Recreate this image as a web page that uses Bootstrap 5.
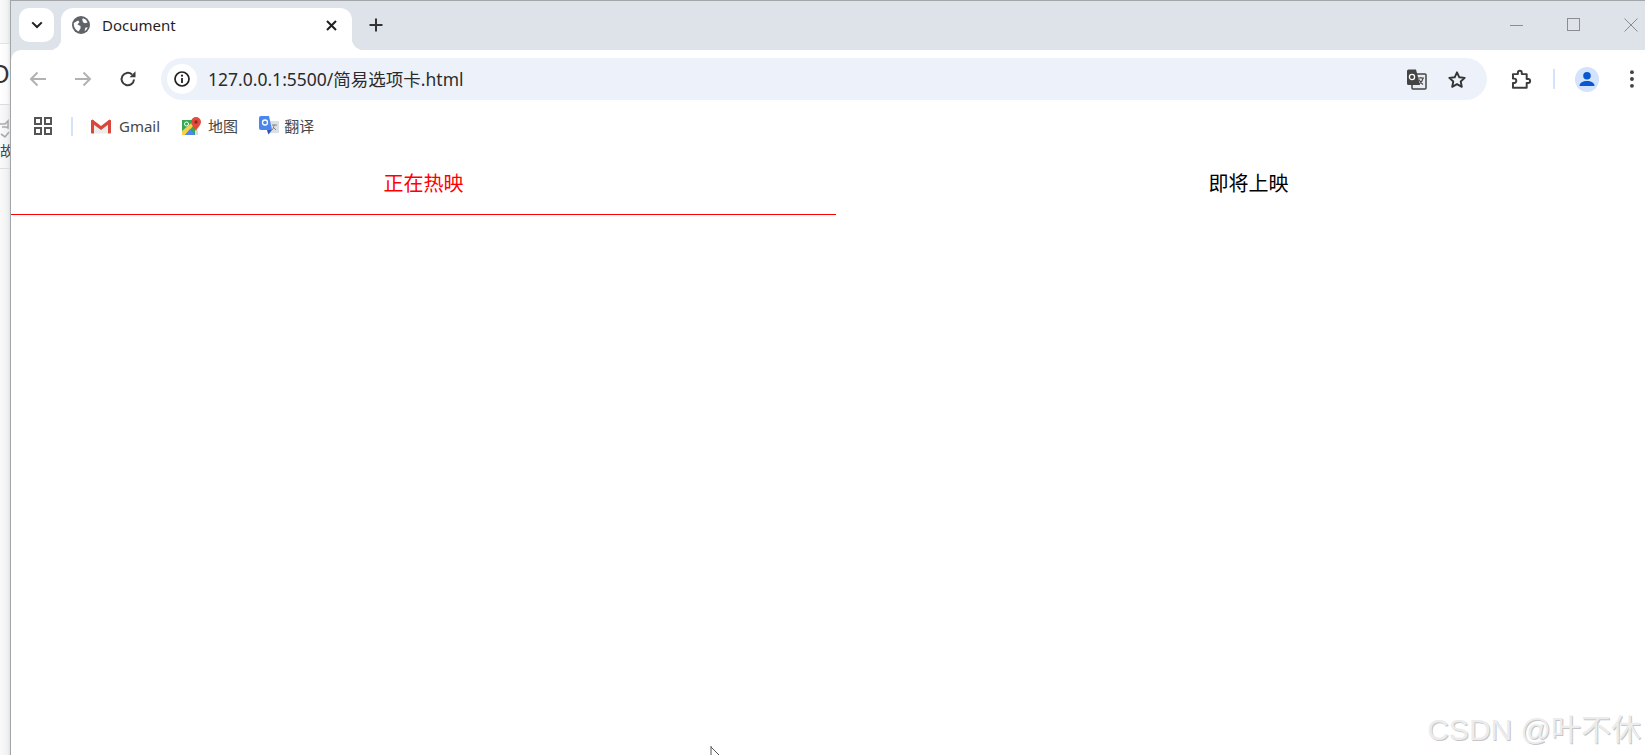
<!DOCTYPE html>
<html lang="zh-CN">
<head>
<meta charset="utf-8">
<title>Document</title>
<link href="https://cdn.jsdelivr.net/npm/bootstrap@5.3.0/dist/css/bootstrap.min.css" rel="stylesheet">
<style>
html,body{height:755px;overflow:hidden;background:#fff}
body{font-family:"Noto Sans","Noto Sans CJK SC",sans-serif;position:relative}
.backwin{width:10px;height:755px;overflow:hidden;flex:none;background:linear-gradient(90deg,#fafafa,#f1f2f3 70%,#e2e3e5);color:#444}
.bw-top{height:44px;border-bottom:1px solid #e2e2e2}
.bw-mid{height:61px;border-bottom:1px solid #dcdcdc;background:linear-gradient(90deg,#fff,#fafafa 70%,#e8e8e8);font:24px/61px "Liberation Sans",sans-serif;color:#333}
.bw-o{margin-left:-10px;display:block;line-height:60px;margin-top:0;font-size:25px}
.bw-low{height:64px;border-bottom:1px solid #ddd;font-size:14px;line-height:16px;text-align:right;padding-top:12px}
.bw-low span{display:block;margin-right:-1px;white-space:nowrap}
.bw-low svg{display:block;margin:0 0 4px 0}
.winframe{width:1635px;flex:none;border-left:1px solid #a3a6a9;border-top:1px solid #a3a6a9;background:#fff}
.strip{height:49px;background:#dee3ea;color:#222;position:relative}
.chev{width:35px;height:34px;margin:7px 0 0 8px;background:#fff;border-radius:10px}
.chrometab{width:291px;height:42px;margin:7px 0 0 7px;background:#fff;border-radius:12px 12px 0 0;position:relative;padding:0 15px 8px 11px;font-size:15px;color:#1f1f1f}
.chrometab::before,.chrometab::after{content:"";position:absolute;bottom:0;width:12px;height:12px}
.chrometab::before{left:-12px;background:radial-gradient(circle at 0 0,transparent 12px,#fff 12.5px)}
.chrometab::after{right:-12px;background:radial-gradient(circle at 100% 0,transparent 12px,#fff 12.5px)}
.tabtitle{margin-left:12px;line-height:1}
.plus{margin:7px 0 0 17px;height:34px}
.winctl{margin-left:auto;height:34px;margin-top:7px}
.winctl svg{display:block}
.ctlgap{margin-left:43px}
.ctlend{margin-right:7px}
.toolrow{height:55px;background:#fff;border-radius:10px 0 0 0}
.corner{background:#dee3ea}
.navbtns{width:150px;height:58px;padding-left:17px;gap:25px}
.reload{margin-left:1px}
.omni{width:1326px;height:42px;background:#edf2fa;border-radius:21px;margin-top:8px;padding:0 20px 0 6px}
.infobub{width:30px;height:30px;background:#fff;border-radius:50%;flex:none}
.urltext{font-size:17.5px;color:#2b2b2b;margin-left:11px;line-height:1;white-space:nowrap;padding-top:2px}
.stargap{margin-left:20px}
.rightbtns{width:147px;padding-left:24px;margin-top:8px;height:42px}
.vsep{width:2px;height:20px;background:#d3e3fd;margin-left:21px}
.avatar{width:25px;height:25px;border-radius:50%;background:#d3e3fd;margin-left:20px;overflow:hidden}
.dots{margin-left:31px}
.bookrow{height:42px;padding-left:23px;font-size:15px;color:#474747}
.bsep{width:2px;height:19px;background:#d3e3fd;margin:0 18px 0 19px}
.bmark{margin-right:22px;white-space:nowrap;line-height:1}
.bmark svg{margin-right:8px}
.bmark-map{margin-right:21px}
.bmark-map svg{margin-right:7px}
.bmark-tr svg{margin-right:5px}
.cntabs{font-family:"Noto Sans CJK SC",sans-serif;font-size:20px;width:1650px}
.cntab{width:825px;flex:none;height:68px;line-height:72px;text-align:center;color:#000;border-bottom:1px solid transparent}
.cntab.on{color:#f00;border-bottom-color:#f00}
.mark-wm{position:absolute;right:4px;bottom:7px;font:30px/1.2 "Liberation Sans","Noto Sans CJK SC",sans-serif;color:#ececec;text-shadow:1px 1px 0 #c6c6c6;white-space:nowrap}
.pointer{position:absolute;left:710px;top:746px}
</style>
</head>
<body class="d-flex">
<div class="backwin">
  <div class="bw-top"></div>
  <div class="bw-mid"><span class="bw-o">O</span></div>
  <div class="bw-low">
    <svg width="10" height="22" viewBox="0 0 10 22"><path d="M-1 7h6l3-3v7l-2-1H2M1 17l4 3 4-5" fill="none" stroke="#aaa" stroke-width="1.6"/></svg>
    <span>故</span>
  </div>
</div>
<div class="winframe">
  <div class="strip d-flex align-items-start">
    <div class="chev d-flex align-items-center justify-content-center">
      <svg width="12" height="8" viewBox="0 0 12 8"><path d="M1.2 1.4 6 6l4.8-4.6" fill="none" stroke="#1f1f1f" stroke-width="2"/></svg>
    </div>
    <div class="chrometab d-flex align-items-center">
      <svg width="18" height="18" viewBox="0 0 18 18"><circle cx="9" cy="9" r="9" fill="#5f6368"/><path d="M1.800 7 6 4.500 7.500 6 5.500 8.500l3 1.500v2.500L6.500 15.500C3.500 14 1.500 11 1.800 7ZM11 2.200l3 1.500 1.600 2.800-2.600.8-2-1-.8-3ZM13.500 11.500h2.300l-1.800 2.800-1.500.7Z" fill="#fff"/></svg>
      <span class="tabtitle">Document</span>
      <svg class="ms-auto" width="11" height="11" viewBox="0 0 11 11"><path d="M1 1l9 9M10 1l-9 9" stroke="#1f1f1f" stroke-width="2"/></svg>
    </div>
    <div class="plus d-flex align-items-center">
      <svg width="14" height="14" viewBox="0 0 14 14"><path d="M7 .5v13M.5 7h13" stroke="#333" stroke-width="2"/></svg>
    </div>
    <div class="winctl d-flex align-items-center">
      <svg width="14" height="14" viewBox="0 0 14 14"><path d="M0 7.500h13" stroke="#8b8d90"/></svg>
      <svg class="ctlgap" width="14" height="14" viewBox="0 0 14 14"><rect x=".5" y=".5" width="12" height="12" fill="none" stroke="#8b8d90"/></svg>
      <svg class="ctlgap ctlend" width="14" height="14" viewBox="0 0 14 14"><path d="M.5.5l13 13M13.500.5l-13 13" stroke="#8b8d90"/></svg>
    </div>
  </div>
  <div class="corner">
  <div class="toolrow d-flex align-items-start">
    <div class="navbtns d-flex align-items-center">
      <svg width="20" height="18" viewBox="0 0 20 18"><path d="M18 9H3M9.500 2.500 3 9l6.500 6.500" fill="none" stroke="#b0b2b4" stroke-width="2"/></svg>
      <svg width="20" height="18" viewBox="0 0 20 18"><path d="M2 9h15M10.500 2.500 17 9l-6.500 6.500" fill="none" stroke="#b0b2b4" stroke-width="2"/></svg>
      <svg class="reload" width="18" height="18" viewBox="0 0 18 18"><path d="M15 9.500A6.200 6.200 0 1 1 13 4.500" fill="none" stroke="#3c3c3c" stroke-width="2"/><path d="M10.500 7.300h6V1.300z" fill="#3c3c3c"/></svg>
    </div>
    <div class="omni d-flex align-items-center">
      <div class="infobub d-flex align-items-center justify-content-center">
        <svg width="16" height="16" viewBox="0 0 16 16"><circle cx="8" cy="8" r="7" fill="none" stroke="#222" stroke-width="1.700"/><path d="M8 7v5" stroke="#222" stroke-width="1.800"/><circle cx="8" cy="4.700" r="1.100" fill="#222"/></svg>
      </div>
      <span class="urltext">127.0.0.1:5500/简易选项卡.html</span>
      <svg class="ms-auto" width="21" height="21" viewBox="0 0 21 21"><rect x="6" y="5" width="14" height="15" rx="1" fill="#e8ecf3" stroke="#444" stroke-width="1.500"/><path d="M1 2a1.500 1.500 0 0 1 1.500-1.500H10L14 16H2.500A1.500 1.500 0 0 1 1 14.500Z" fill="#444"/><circle cx="6" cy="8" r="2.600" fill="none" stroke="#fff" stroke-width="1.300"/><path d="M12 9h6M15 8v1M17 9c-.5 3-2 5-4 6M13 10.500c1 2 2.500 4 4 5" fill="none" stroke="#444" stroke-width="1.100"/></svg>
      <svg class="stargap" width="20" height="19" viewBox="0 0 20 19"><path d="M10 2.300l2.300 5 5.400.6-4 3.600 1.100 5.300L10 14.100l-4.800 2.700 1.100-5.300-4-3.600 5.400-.6z" fill="none" stroke="#333" stroke-width="1.900" stroke-linejoin="round"/></svg>
    </div>
    <div class="rightbtns d-flex align-items-center">
      <svg width="21" height="21" viewBox="0 0 21 21"><path d="M2 5h5V3.500a2 2 0 0 1 4 0V5h5v5h1.500a2 2 0 0 1 0 4H16v5H2v-5h1.200a2.200 2.200 0 0 0 0-4.400H2Z" fill="none" stroke="#3c3c3c" stroke-width="2" stroke-linejoin="round"/></svg>
      <div class="vsep"></div>
      <div class="avatar d-flex align-items-center justify-content-center">
        <svg width="18" height="18" viewBox="0 0 18 18"><circle cx="9" cy="5.700" r="3.800" fill="#0b57d0"/><path d="M1.500 16c0-3.500 3.500-5 7.500-5s7.500 1.500 7.500 5z" fill="#0b57d0"/></svg>
      </div>
      <svg class="dots" width="4" height="18" viewBox="0 0 4 18"><circle cx="2" cy="2" r="2" fill="#444"/><circle cx="2" cy="9" r="2" fill="#444"/><circle cx="2" cy="16" r="2" fill="#444"/></svg>
    </div>
  </div>
  </div>
  <div class="bookrow d-flex align-items-center">
    <svg width="18" height="18" viewBox="0 0 18 18"><path d="M1 1h6v6H1zM11 1h6v6h-6zM1 11h6v6H1zM11 11h6v6h-6z" fill="none" stroke="#555" stroke-width="2"/></svg>
    <div class="bsep"></div>
    <div class="bmark d-flex align-items-center">
      <svg width="20" height="15" viewBox="0 0 20 15"><path d="M0 1.500h3v13H1a1 1 0 0 1-1-1zM17 1.500h3v12a1 1 0 0 1-1 1h-2z" fill="#d9473c"/><path d="M3 4v10.500h14V4l-7 5.500z" fill="#ececec"/><path d="M0 1.500 1.500.5 10 7l8.500-6.500L20 1.500v2L10 11 0 3.500z" fill="#d9473c"/></svg>
      <span>Gmail</span>
    </div>
    <div class="bmark bmark-map d-flex align-items-center">
      <svg width="19" height="19" viewBox="0 0 19 19"><path d="M0 3h13v15H0z" fill="#35a853"/><path d="M0 14 13 3v4L3 18H0z" fill="#f7d046"/><path d="M3 18l5-6 5 6z" fill="#4a89f3"/><path d="M13 12v6h3V14z" fill="#dcdcdc"/><circle cx="4.500" cy="7" r="2" fill="none" stroke="#fff"/><path d="M14 0a5 5 0 0 1 5 5c0 3-3 5-5 9-2-4-5-6-5-9a5 5 0 0 1 5-5z" fill="#e34b3e"/><circle cx="14" cy="5" r="1.700" fill="#8c2a22"/></svg>
      <span>地图</span>
    </div>
    <div class="bmark bmark-tr d-flex align-items-center">
      <svg width="20" height="20" viewBox="0 0 20 20"><rect x="8" y="5" width="12" height="12" fill="#dcdfe4"/><path d="M2 0h8l3 14H2a2 2 0 0 1-2-2V2a2 2 0 0 1 2-2z" fill="#4a86ee"/><path d="M8 14h5l-3.500 4.500z" fill="#2f55b8"/><circle cx="6" cy="6.500" r="2.500" fill="none" stroke="#fff" stroke-width="1.300"/><path d="M13 9h5M15 9c0 2-1 4-2 5M14 11l3 3" stroke="#777" fill="none" stroke-width=".9"/></svg>
      <span>翻译</span>
    </div>
  </div>
  <div class="cntabs d-flex">
    <div class="cntab on">正在热映</div>
    <div class="cntab">即将上映</div>
  </div>
</div>
<svg class="pointer" width="12" height="9" viewBox="0 0 12 9"><path d="M1 0v9M1 1l8 8" stroke="#555" fill="none"/></svg>
<div class="mark-wm">CSDN @叶不休</div>
<script src="https://cdn.jsdelivr.net/npm/bootstrap@5.3.0/dist/js/bootstrap.bundle.min.js"></script>
</body>
</html>
